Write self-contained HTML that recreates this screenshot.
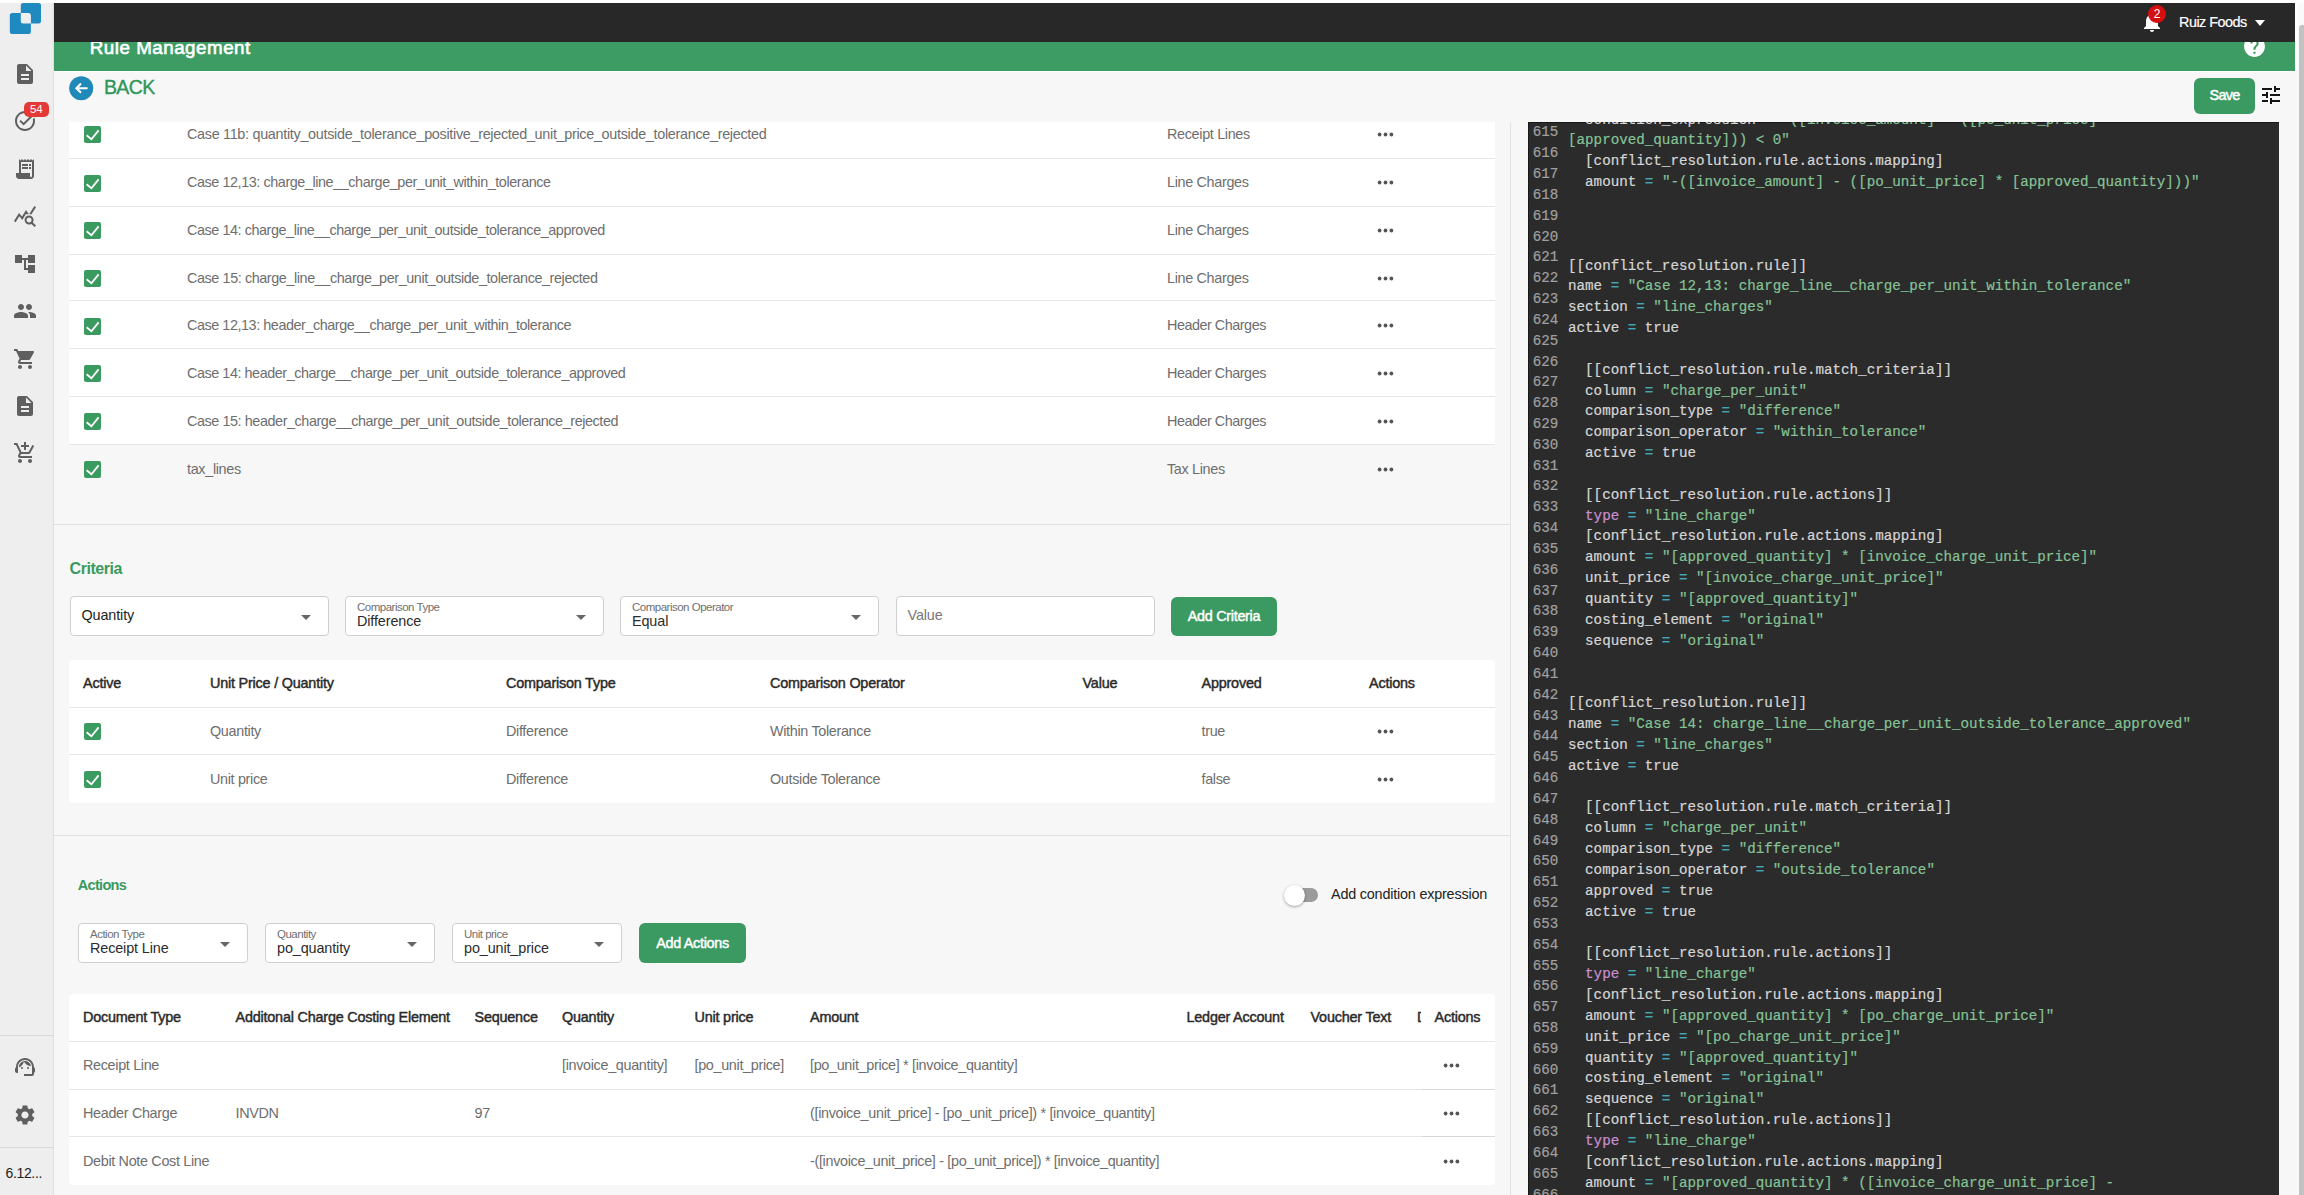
<!DOCTYPE html>
<html><head><meta charset="utf-8"><title>Rule Management</title><style>
*{margin:0;padding:0;box-sizing:border-box}
html,body{width:2304px;height:1195px;overflow:hidden;background:#fff;font-family:"Liberation Sans",sans-serif}
.abs{position:absolute}
.txt{font-size:14.4px;color:#6e6e6e;line-height:22px;white-space:pre;letter-spacing:-0.33px}
.th{font-size:14.4px;color:#2a2a2a;font-weight:normal;-webkit-text-stroke:0.45px #2a2a2a;line-height:22px;white-space:pre;letter-spacing:-0.2px}
.box{background:#fff;border:1px solid #cfcfcf;border-radius:4px}
.lbl{font-size:11.5px;color:#6f6f6f;line-height:14px;white-space:pre;letter-spacing:-0.5px}
.val{font-size:14.4px;color:#2b2b2b;line-height:20px;white-space:pre;letter-spacing:-0.12px}
.btn{background:#3b9a62;border-radius:6px;color:#fff;font-size:14.4px;font-weight:normal;-webkit-text-stroke:0.45px #fff;text-align:center;letter-spacing:-0.3px}
pre{position:absolute;font-family:"Liberation Mono",monospace;font-size:14.23px;line-height:20.85px;white-space:pre;-webkit-text-stroke:0.2px currentColor}
.nums{left:5.2px;top:0.9px;color:#a0a0a0;line-height:20.835px}
.code{left:40.5px;top:-11.9px;color:#d6d6d6}
.code s{text-decoration:none;color:#85c296}
.code b{font-weight:normal;color:#43a7b6}
.code i{font-style:normal;color:#c98fd0}
</style></head>
<body>
<div class="abs" style="left:0;top:0;width:54px;height:1195px;background:#eeeeee;border-right:1px solid #dedede"></div>
<div class="abs" style="left:0;top:0;width:2304px;height:3px;background:#fff"></div>
<svg class="abs" style="left:0;top:0" width="54" height="40" viewBox="0 0 54 40"><path fill-rule="evenodd" fill="#1f8ac0" d="M23.3 2.9h15.2a2.5 2.5 0 0 1 2.5 2.5v15.5a2.5 2.5 0 0 1-2.5 2.5H23.3a2.5 2.5 0 0 1-2.5-2.5V5.4a2.5 2.5 0 0 1 2.5-2.5z M12.3 13h16.1a2.5 2.5 0 0 1 2.5 2.5v16.1a2.5 2.5 0 0 1-2.5 2.5H12.3a2.5 2.5 0 0 1-2.5-2.5V15.5a2.5 2.5 0 0 1 2.5-2.5z"/></svg>
<div class="abs" style="left:13.0px;top:62.0px"><svg width="24" height="24" viewBox="0 0 24 24" style="display:block"><path fill="#5f5f5f" d="M14 2H6c-1.1 0-2 .9-2 2v16c0 1.1.9 2 2 2h12c1.1 0 2-.9 2-2V8l-6-6zm2 16H8v-2h8v2zm0-4H8v-2h8v2zm-3-5V3.5L18.5 9H13z"/></svg></div>
<div class="abs" style="left:13.0px;top:109.0px"><svg width="24" height="24" viewBox="0 0 24 24" style="display:block"><path fill="#5f5f5f" d="M22,5.18L10.59,16.6l-4.24-4.24l1.41-1.41l2.83,2.83l10-10L22,5.18z M19.79,10.22C19.92,10.79,20,11.39,20,12c0,4.42-3.58,8-8,8s-8-3.58-8-8c0-4.42,3.58-8,8-8c1.58,0,3.04,0.46,4.28,1.25l1.44-1.44C16.1,2.67,14.13,2,12,2C6.48,2,2,6.48,2,12c0,5.52,4.48,10,10,10s10-4.48,10-10c0-1.19-0.22-2.33-0.6-3.39L19.79,10.22z"/></svg></div>
<div class="abs" style="left:13.0px;top:157.0px"><svg width="24" height="24" viewBox="0 0 24 24" style="display:block"><path fill="#5f5f5f" d="M19.5 3.5L18 2l-1.5 1.5L15 2l-1.5 1.5L12 2l-1.5 1.5L9 2 7.5 3.5 6 2v14H3v3c0 1.66 1.34 3 3 3h12c1.66 0 3-1.34 3-3V2l-1.5 1.5zM19 19c0 .55-.45 1-1 1s-1-.45-1-1v-3H8V5h11v14zM9 7h6v2H9zm7 0h2v2h-2zm-7 3h6v2H9zm7 0h2v2h-2z"/></svg></div>
<div class="abs" style="left:13.0px;top:204.0px"><svg width="24" height="24" viewBox="0 0 24 24" style="display:block"><path fill="#5f5f5f" d="M19.88 18.47c.44-.7.7-1.51.7-2.39 0-2.49-2.01-4.5-4.5-4.5s-4.5 2.01-4.5 4.5 2.01 4.5 4.49 4.5c.88 0 1.7-.26 2.39-.7L21.58 23 23 21.58l-3.12-3.11zm-3.8.11c-1.38 0-2.5-1.12-2.5-2.5s1.12-2.5 2.5-2.5 2.5 1.12 2.5 2.5-1.12 2.5-2.5 2.5zm-.36-8.5c-.74.02-1.45.18-2.1.45l-.55-.83-3.8 6.18-3.01-3.52-3.63 5.81L1 17l5-8 3 3.5L13 6l2.72 4.08zm2.59.5c-.64-.28-1.33-.45-2.05-.49L21.38 2 23 3.18l-4.69 7.4z"/></svg></div>
<div class="abs" style="left:13.0px;top:252.0px"><svg width="24" height="24" viewBox="0 0 24 24" style="display:block"><path fill="#5f5f5f" d="M22 11V3h-7v3H9V3H2v8h7V8h2v10h4v3h7v-8h-7v3h-2V8h2v3z"/></svg></div>
<div class="abs" style="left:13.0px;top:299.0px"><svg width="24" height="24" viewBox="0 0 24 24" style="display:block"><path fill="#5f5f5f" d="M16 11c1.66 0 2.99-1.34 2.99-3S17.66 5 16 5c-1.66 0-3 1.34-3 3s1.34 3 3 3zm-8 0c1.66 0 2.99-1.34 2.99-3S9.66 5 8 5C6.34 5 5 6.34 5 8s1.34 3 3 3zm0 2c-2.33 0-7 1.17-7 3.5V19h14v-2.5c0-2.33-4.67-3.5-7-3.5zm8 0c-.29 0-.62.02-.97.05 1.16.84 1.97 1.970 1.97 3.45V19h6v-2.5c0-2.33-4.670-3.5-7-3.5z"/></svg></div>
<div class="abs" style="left:13.0px;top:347.0px"><svg width="24" height="24" viewBox="0 0 24 24" style="display:block"><path fill="#5f5f5f" d="M7 18c-1.1 0-1.99.9-1.99 2S5.9 22 7 22s2-.9 2-2-.9-2-2-2zM1 2v2h2l3.6 7.59-1.35 2.45c-.16.28-.25.61-.25.96 0 1.1.9 2 2 2h12v-2H7.42c-.14 0-.25-.11-.25-.25l.03-.12.9-1.63h7.45c.75 0 1.41-.41 1.75-1.03l3.58-6.49c.08-.14.12-.31.12-.48 0-.55-.45-1-1-1H5.21l-.94-2H1zm16 16c-1.1 0-1.99.9-1.99 2s.89 2 1.99 2 2-.9 2-2-.9-2-2-2z"/></svg></div>
<div class="abs" style="left:13.0px;top:394.0px"><svg width="24" height="24" viewBox="0 0 24 24" style="display:block"><path fill="#5f5f5f" d="M14 2H6c-1.1 0-2 .9-2 2v16c0 1.1.9 2 2 2h12c1.1 0 2-.9 2-2V8l-6-6zm2 16H8v-2h8v2zm0-4H8v-2h8v2zm-3-5V3.5L18.5 9H13z"/></svg></div>
<div class="abs" style="left:13.0px;top:441.0px"><svg width="24" height="24" viewBox="0 0 24 24" style="display:block"><path fill="#5f5f5f" d="M11 9h2V6h3V4h-3V1h-2v3H8v2h3v3zm-4 9c-1.1 0-1.99.9-1.99 2S5.9 22 7 22s2-.9 2-2-.9-2-2-2zm10 0c-1.1 0-1.99.9-1.99 2s.89 2 1.99 2 2-.9 2-2-.9-2-2-2zm-9.83-3.25l.03-.12.9-1.63h7.45c.75 0 1.41-.41 1.75-1.03l3.86-7.01L19.42 4h-.01l-1.1 2-2.76 5H8.53l-.13-.27L6.16 6l-.95-2-.94-2H1v2h2l3.6 7.59-1.35 2.45c-.16.28-.25.61-.25.96 0 1.1.9 2 2 2h12v-2H7.42c-.13 0-.25-.11-.25-.25z"/></svg></div>
<div class="abs" style="left:13.0px;top:1055.0px"><svg width="24" height="24" viewBox="0 0 24 24" style="display:block"><path fill="#5f5f5f" d="M21 12.22C21 6.73 16.74 3 12 3c-4.69 0-9 3.65-9 9.28-.6.34-1 .98-1 1.72v2c0 1.1.9 2 2 2h1v-6.1c0-3.87 3.13-7 7-7s7 3.13 7 7V19h-8v2h8c1.1 0 2-.9 2-2v-1.22c.59-.31 1-.92 1-1.64v-2.3c0-.7-.41-1.31-1-1.62zM9 12a1 1 0 1 0 0 2 1 1 0 1 0 0-2zm6 0a1 1 0 1 0 0 2 1 1 0 1 0 0-2zm3-.97C17.52 8.18 15.04 6 12.05 6c-3.03 0-6.290 2.51-6.03 6.45 2.47-1.01 4.33-3.21 4.86-5.89 1.31 2.63 4 4.44 7.12 4.470z"/></svg></div>
<div class="abs" style="left:13.0px;top:1103.0px"><svg width="24" height="24" viewBox="0 0 24 24" style="display:block"><path fill="#5f5f5f" d="M19.14 12.94c.04-.3.06-.61.06-.94 0-.32-.02-.64-.07-.94l2.03-1.58c.18-.14.23-.41.12-.61l-1.92-3.32c-.12-.22-.37-.29-.59-.22l-2.39.96c-.5-.38-1.03-.7-1.62-.94l-.36-2.54c-.04-.24-.24-.41-.48-.41h-3.84c-.24 0-.43.17-.47.41l-.36 2.54c-.59.24-1.13.57-1.62.94l-2.39-.96c-.22-.08-.47 0-.59.22L2.74 8.87c-.12.21-.08.47.12.61l2.03 1.58c-.05.3-.09.63-.09.94s.02.64.07.94l-2.03 1.58c-.18.14-.23.41-.12.61l1.92 3.32c.12.22.37.29.59.22l2.39-.96c.5.38 1.03.7 1.62.94l.36 2.54c.05.24.24.41.48.41h3.84c.24 0 .44-.17.47-.41l.36-2.54c.59-.24 1.13-.56 1.62-.94l2.39.96c.22.08.47 0 .59-.22l1.92-3.32c.12-.22.07-.47-.12-.61l-2.01-1.58zM12 15.6c-1.98 0-3.6-1.62-3.6-3.6s1.62-3.6 3.6-3.6 3.6 1.62 3.6 3.6-1.62 3.6-3.6 3.6z"/></svg></div>
<div class="abs" style="left:23.8px;top:102.2px;width:25px;height:15px;background:#e53935;border-radius:5px;color:#fff;font-size:11.5px;line-height:15px;text-align:center">54</div>
<div class="abs" style="left:0;top:1035px;width:53px;height:1px;background:#d8d8d8"></div>
<div class="abs" style="left:0;top:1147px;width:53px;height:1px;background:#d8d8d8"></div>
<div class="abs" style="left:5.5px;top:1163px;font-size:14px;color:#222;line-height:20px;letter-spacing:-0.35px">6.12...</div>
<div class="abs" style="left:54px;top:70px;width:2250px;height:1125px;background:#f7f7f7"></div>
<div class="abs" style="left:54px;top:70.8px;width:2241px;height:1.2px;background:#fff"></div>
<div class="abs" style="left:54px;top:40px;width:2241px;height:30.8px;background:#3d9b64"></div>
<div class="abs" style="left:89.8px;top:36px;font-size:18.8px;font-weight:normal;-webkit-text-stroke:0.6px #fff;color:#fff;line-height:24px;letter-spacing:0.5px">Rule Management</div>
<div class="abs" style="left:2242px;top:34px"><svg width="25" height="25" viewBox="0 0 24 24" style="display:block"><path fill="#fff" d="M12 2C6.48 2 2 6.48 2 12s4.48 10 10 10 10-4.48 10-10S17.52 2 12 2zm1 17h-2v-2h2v2zm2.07-7.75l-.9.92C13.45 12.9 13 13.5 13 15h-2v-.5c0-1.1.45-2.1 1.17-2.83l1.24-1.26c.37-.36.59-.86.59-1.41 0-1.1-.9-2-2-2s-2 .9-2 2H8c0-2.21 1.79-4 4-4s4 1.79 4 4c0 .88-.36 1.68-.93 2.25z"/></svg></div>
<div class="abs" style="left:54px;top:3px;width:2241px;height:39px;background:#282828"></div>
<div class="abs" style="left:2139.8px;top:10px"><svg width="24" height="24" viewBox="0 0 24 24" style="display:block"><path fill="#fff" d="M12 22c1.1 0 2-.9 2-2h-4c0 1.1.89 2 2 2zm6-6v-5c0-3.07-1.64-5.64-4.5-6.32V4c0-.83-.67-1.5-1.5-1.5s-1.5.67-1.5 1.5v.68C7.63 5.36 6 7.92 6 11v5l-2 2v1h16v-1l-2-2z"/></svg></div>
<div class="abs" style="left:2148px;top:5px;width:18px;height:18px;border-radius:50%;background:#d50f0f;color:#fff;font-size:12px;line-height:18px;text-align:center">2</div>
<div class="abs" style="left:2179px;top:12px;font-size:14.4px;color:#fff;-webkit-text-stroke:0.2px #fff;line-height:20px;letter-spacing:-0.5px">Ruiz Foods</div>
<svg class="abs" style="left:2254.5px;top:20px" width="10" height="6" viewBox="0 0 10 6"><path d="M0 0h10L5 6z" fill="#fff"/></svg>
<div class="abs" style="left:2298px;top:3px;width:6px;height:1192px;background:#fafafa"></div>
<div class="abs" style="left:2299px;top:25px;width:5px;height:1170px;background:#c2c2c2;border-radius:3px 0 0 0"></div>
<svg class="abs" style="left:69.3px;top:75.5px" width="25" height="25" viewBox="0 0 25 25"><circle cx="12.2" cy="12.2" r="12" fill="#2189b8"/><path d="M18.6 12.2H7.6 M12 7.6 L7.4 12.2 L12 16.8" stroke="#fff" stroke-width="2.1" fill="none"/></svg>
<div class="abs" style="left:104px;top:74.7px;font-size:19.5px;color:#2f9658;-webkit-text-stroke:0.35px #2f9658;line-height:24px;letter-spacing:-0.65px">BACK</div>
<div class="abs btn" style="left:2194px;top:78px;width:61px;height:35.8px;line-height:35.8px;letter-spacing:-0.7px">Save</div>
<div class="abs" style="left:2258.7px;top:83.3px"><svg width="24" height="24" viewBox="0 0 24 24" style="display:block"><path fill="#151515" d="M3 17v2h6v-2H3zM3 5v2h10V5H3zm10 16v-2h8v-2h-8v-2h-2v6h2zM7 9v2H3v2h4v2h2V9H7zm14 4v-2H11v2h10zm-6-4h2V7h4V5h-4V3h-2v6z"/></svg></div>
<div class="abs" style="left:1510px;top:122px;width:1px;height:1073px;background:#e2e2e2"></div>
<div class="abs" style="left:69px;top:122px;width:1426px;height:322px;background:#fff"></div>
<div class="abs" style="left:69px;top:158px;width:1426px;height:1px;background:#e6e6e6"></div>
<div class="abs" style="left:69px;top:206px;width:1426px;height:1px;background:#e6e6e6"></div>
<div class="abs" style="left:69px;top:254px;width:1426px;height:1px;background:#e6e6e6"></div>
<div class="abs" style="left:69px;top:300px;width:1426px;height:1px;background:#e6e6e6"></div>
<div class="abs" style="left:69px;top:348px;width:1426px;height:1px;background:#e6e6e6"></div>
<div class="abs" style="left:69px;top:396px;width:1426px;height:1px;background:#e6e6e6"></div>
<div class="abs" style="left:69px;top:444px;width:1426px;height:1px;background:#e6e6e6"></div>
<div class="abs" style="left:84px;top:126.0px"><svg width="17" height="17" viewBox="0 0 17 17" style="display:block"><rect x="0" y="0" width="17" height="17" rx="2" fill="#3a9a60"/><path d="M2.6 9.2 L7.4 13.3 L14.6 4.4" stroke="#fff" stroke-width="1.8" fill="none"/></svg></div>
<div class="abs txt" style="left:187px;top:122.5px;letter-spacing:-0.308px">Case 11b: quantity_outside_tolerance_positive_rejected_unit_price_outside_tolerance_rejected</div>
<div class="abs txt" style="left:1167px;top:122.5px;letter-spacing:-0.33px">Receipt Lines</div>
<div class="abs" style="left:1377px;top:131.0px"><svg width="17" height="5" viewBox="0 0 17 5" style="display:block;margin-top:0.7px"><circle cx="2.6" cy="2.5" r="1.9" fill="#555"/><circle cx="8.5" cy="2.5" r="1.9" fill="#555"/><circle cx="14.4" cy="2.5" r="1.9" fill="#555"/></svg></div>
<div class="abs" style="left:84px;top:174.5px"><svg width="17" height="17" viewBox="0 0 17 17" style="display:block"><rect x="0" y="0" width="17" height="17" rx="2" fill="#3a9a60"/><path d="M2.6 9.2 L7.4 13.3 L14.6 4.4" stroke="#fff" stroke-width="1.8" fill="none"/></svg></div>
<div class="abs txt" style="left:187px;top:171px;letter-spacing:-0.428px">Case 12,13: charge_line__charge_per_unit_within_tolerance</div>
<div class="abs txt" style="left:1167px;top:171px;letter-spacing:-0.33px">Line Charges</div>
<div class="abs" style="left:1377px;top:179.5px"><svg width="17" height="5" viewBox="0 0 17 5" style="display:block;margin-top:0.7px"><circle cx="2.6" cy="2.5" r="1.9" fill="#555"/><circle cx="8.5" cy="2.5" r="1.9" fill="#555"/><circle cx="14.4" cy="2.5" r="1.9" fill="#555"/></svg></div>
<div class="abs" style="left:84px;top:222.0px"><svg width="17" height="17" viewBox="0 0 17 17" style="display:block"><rect x="0" y="0" width="17" height="17" rx="2" fill="#3a9a60"/><path d="M2.6 9.2 L7.4 13.3 L14.6 4.4" stroke="#fff" stroke-width="1.8" fill="none"/></svg></div>
<div class="abs txt" style="left:187px;top:218.5px;letter-spacing:-0.435px">Case 14: charge_line__charge_per_unit_outside_tolerance_approved</div>
<div class="abs txt" style="left:1167px;top:218.5px;letter-spacing:-0.33px">Line Charges</div>
<div class="abs" style="left:1377px;top:227.0px"><svg width="17" height="5" viewBox="0 0 17 5" style="display:block;margin-top:0.7px"><circle cx="2.6" cy="2.5" r="1.9" fill="#555"/><circle cx="8.5" cy="2.5" r="1.9" fill="#555"/><circle cx="14.4" cy="2.5" r="1.9" fill="#555"/></svg></div>
<div class="abs" style="left:84px;top:270.0px"><svg width="17" height="17" viewBox="0 0 17 17" style="display:block"><rect x="0" y="0" width="17" height="17" rx="2" fill="#3a9a60"/><path d="M2.6 9.2 L7.4 13.3 L14.6 4.4" stroke="#fff" stroke-width="1.8" fill="none"/></svg></div>
<div class="abs txt" style="left:187px;top:266.5px;letter-spacing:-0.411px">Case 15: charge_line__charge_per_unit_outside_tolerance_rejected</div>
<div class="abs txt" style="left:1167px;top:266.5px;letter-spacing:-0.33px">Line Charges</div>
<div class="abs" style="left:1377px;top:275.0px"><svg width="17" height="5" viewBox="0 0 17 5" style="display:block;margin-top:0.7px"><circle cx="2.6" cy="2.5" r="1.9" fill="#555"/><circle cx="8.5" cy="2.5" r="1.9" fill="#555"/><circle cx="14.4" cy="2.5" r="1.9" fill="#555"/></svg></div>
<div class="abs" style="left:84px;top:317.5px"><svg width="17" height="17" viewBox="0 0 17 17" style="display:block"><rect x="0" y="0" width="17" height="17" rx="2" fill="#3a9a60"/><path d="M2.6 9.2 L7.4 13.3 L14.6 4.4" stroke="#fff" stroke-width="1.8" fill="none"/></svg></div>
<div class="abs txt" style="left:187px;top:314px;letter-spacing:-0.445px">Case 12,13: header_charge__charge_per_unit_within_tolerance</div>
<div class="abs txt" style="left:1167px;top:314px;letter-spacing:-0.48px">Header Charges</div>
<div class="abs" style="left:1377px;top:322.5px"><svg width="17" height="5" viewBox="0 0 17 5" style="display:block;margin-top:0.7px"><circle cx="2.6" cy="2.5" r="1.9" fill="#555"/><circle cx="8.5" cy="2.5" r="1.9" fill="#555"/><circle cx="14.4" cy="2.5" r="1.9" fill="#555"/></svg></div>
<div class="abs" style="left:84px;top:365.0px"><svg width="17" height="17" viewBox="0 0 17 17" style="display:block"><rect x="0" y="0" width="17" height="17" rx="2" fill="#3a9a60"/><path d="M2.6 9.2 L7.4 13.3 L14.6 4.4" stroke="#fff" stroke-width="1.8" fill="none"/></svg></div>
<div class="abs txt" style="left:187px;top:361.5px;letter-spacing:-0.45px">Case 14: header_charge__charge_per_unit_outside_tolerance_approved</div>
<div class="abs txt" style="left:1167px;top:361.5px;letter-spacing:-0.48px">Header Charges</div>
<div class="abs" style="left:1377px;top:370.0px"><svg width="17" height="5" viewBox="0 0 17 5" style="display:block;margin-top:0.7px"><circle cx="2.6" cy="2.5" r="1.9" fill="#555"/><circle cx="8.5" cy="2.5" r="1.9" fill="#555"/><circle cx="14.4" cy="2.5" r="1.9" fill="#555"/></svg></div>
<div class="abs" style="left:84px;top:413.0px"><svg width="17" height="17" viewBox="0 0 17 17" style="display:block"><rect x="0" y="0" width="17" height="17" rx="2" fill="#3a9a60"/><path d="M2.6 9.2 L7.4 13.3 L14.6 4.4" stroke="#fff" stroke-width="1.8" fill="none"/></svg></div>
<div class="abs txt" style="left:187px;top:409.5px;letter-spacing:-0.427px">Case 15: header_charge__charge_per_unit_outside_tolerance_rejected</div>
<div class="abs txt" style="left:1167px;top:409.5px;letter-spacing:-0.48px">Header Charges</div>
<div class="abs" style="left:1377px;top:418.0px"><svg width="17" height="5" viewBox="0 0 17 5" style="display:block;margin-top:0.7px"><circle cx="2.6" cy="2.5" r="1.9" fill="#555"/><circle cx="8.5" cy="2.5" r="1.9" fill="#555"/><circle cx="14.4" cy="2.5" r="1.9" fill="#555"/></svg></div>
<div class="abs" style="left:84px;top:461.0px"><svg width="17" height="17" viewBox="0 0 17 17" style="display:block"><rect x="0" y="0" width="17" height="17" rx="2" fill="#3a9a60"/><path d="M2.6 9.2 L7.4 13.3 L14.6 4.4" stroke="#fff" stroke-width="1.8" fill="none"/></svg></div>
<div class="abs txt" style="left:187px;top:457.5px;letter-spacing:-0.33px">tax_lines</div>
<div class="abs txt" style="left:1167px;top:457.5px;letter-spacing:-0.33px">Tax Lines</div>
<div class="abs" style="left:1377px;top:466.0px"><svg width="17" height="5" viewBox="0 0 17 5" style="display:block;margin-top:0.7px"><circle cx="2.6" cy="2.5" r="1.9" fill="#555"/><circle cx="8.5" cy="2.5" r="1.9" fill="#555"/><circle cx="14.4" cy="2.5" r="1.9" fill="#555"/></svg></div>
<div class="abs" style="left:54px;top:524px;width:1456px;height:1px;background:#e0e0e0"></div>
<div class="abs" style="left:69.6px;top:558px;font-size:16px;font-weight:bold;color:#3a9a60;line-height:22px;letter-spacing:-0.45px">Criteria</div>
<div class="abs box" style="left:69.5px;top:596px;width:259.5px;height:40px"><div class="abs val" style="left:11px;top:7.5px;color:#222">Quantity</div><div class="abs" style="left:230.0px;top:17.5px"><svg width="10" height="5" viewBox="0 0 10 5" style="display:block"><path d="M0 0 L10 0 L5 5z" fill="#666"/></svg></div></div>
<div class="abs box" style="left:345px;top:596px;width:259px;height:40px"><div class="abs lbl" style="left:11px;top:3.2px">Comparison Type</div><div class="abs val" style="left:11px;top:14.3px">Difference</div><div class="abs" style="left:229.5px;top:17.5px"><svg width="10" height="5" viewBox="0 0 10 5" style="display:block"><path d="M0 0 L10 0 L5 5z" fill="#666"/></svg></div></div>
<div class="abs box" style="left:620px;top:596px;width:259px;height:40px"><div class="abs lbl" style="left:11px;top:3.2px">Comparison Operator</div><div class="abs val" style="left:11px;top:14.3px">Equal</div><div class="abs" style="left:229.5px;top:17.5px"><svg width="10" height="5" viewBox="0 0 10 5" style="display:block"><path d="M0 0 L10 0 L5 5z" fill="#666"/></svg></div></div>
<div class="abs box" style="left:895.5px;top:596px;width:259.5px;height:40px"><div class="abs val" style="left:11px;top:7.5px;color:#777">Value</div></div>
<div class="abs btn" style="left:1171px;top:596.5px;width:106px;height:39.5px;line-height:39.5px">Add Criteria</div>
<div class="abs" style="left:69px;top:660px;width:1426px;height:143px;background:#fff;border-radius:4px"></div>
<div class="abs" style="left:69px;top:707px;width:1426px;height:1px;background:#e6e6e6"></div>
<div class="abs" style="left:69px;top:754px;width:1426px;height:1px;background:#e6e6e6"></div>
<div class="abs th" style="left:83px;top:672.0px">Active</div>
<div class="abs th" style="left:210px;top:672.0px">Unit Price / Quantity</div>
<div class="abs th" style="left:506px;top:672.0px">Comparison Type</div>
<div class="abs th" style="left:770px;top:672.0px">Comparison Operator</div>
<div class="abs th" style="left:1082.5px;top:672.0px">Value</div>
<div class="abs th" style="left:1201.5px;top:672.0px">Approved</div>
<div class="abs th" style="left:1369px;top:672.0px">Actions</div>
<div class="abs" style="left:84px;top:723.0px"><svg width="17" height="17" viewBox="0 0 17 17" style="display:block"><rect x="0" y="0" width="17" height="17" rx="2" fill="#3a9a60"/><path d="M2.6 9.2 L7.4 13.3 L14.6 4.4" stroke="#fff" stroke-width="1.8" fill="none"/></svg></div>
<div class="abs txt" style="left:210px;top:719.5px">Quantity</div>
<div class="abs txt" style="left:506px;top:719.5px">Difference</div>
<div class="abs txt" style="left:770px;top:719.5px">Within Tolerance</div>
<div class="abs txt" style="left:1201.5px;top:719.5px">true</div>
<div class="abs" style="left:1377px;top:728.0px"><svg width="17" height="5" viewBox="0 0 17 5" style="display:block;margin-top:0.7px"><circle cx="2.6" cy="2.5" r="1.9" fill="#555"/><circle cx="8.5" cy="2.5" r="1.9" fill="#555"/><circle cx="14.4" cy="2.5" r="1.9" fill="#555"/></svg></div>
<div class="abs" style="left:84px;top:771.0px"><svg width="17" height="17" viewBox="0 0 17 17" style="display:block"><rect x="0" y="0" width="17" height="17" rx="2" fill="#3a9a60"/><path d="M2.6 9.2 L7.4 13.3 L14.6 4.4" stroke="#fff" stroke-width="1.8" fill="none"/></svg></div>
<div class="abs txt" style="left:210px;top:767.5px">Unit price</div>
<div class="abs txt" style="left:506px;top:767.5px">Difference</div>
<div class="abs txt" style="left:770px;top:767.5px">Outside Tolerance</div>
<div class="abs txt" style="left:1201.5px;top:767.5px">false</div>
<div class="abs" style="left:1377px;top:776.0px"><svg width="17" height="5" viewBox="0 0 17 5" style="display:block;margin-top:0.7px"><circle cx="2.6" cy="2.5" r="1.9" fill="#555"/><circle cx="8.5" cy="2.5" r="1.9" fill="#555"/><circle cx="14.4" cy="2.5" r="1.9" fill="#555"/></svg></div>
<div class="abs" style="left:54px;top:835px;width:1456px;height:1px;background:#e0e0e0"></div>
<div class="abs" style="left:77.8px;top:874px;font-size:14.5px;font-weight:bold;color:#3a9a60;line-height:22px;letter-spacing:-0.7px">Actions</div>
<div class="abs" style="left:1287px;top:888px;width:31px;height:14px;border-radius:7px;background:#9b9b9b"></div>
<div class="abs" style="left:1284px;top:884.5px;width:21px;height:21px;border-radius:50%;background:#fff;box-shadow:0 1px 3px rgba(0,0,0,0.35)"></div>
<div class="abs" style="left:1331px;top:883px;font-size:14.4px;color:#222;line-height:22px;letter-spacing:-0.2px">Add condition expression</div>
<div class="abs box" style="left:78px;top:923px;width:170px;height:40px"><div class="abs lbl" style="left:11px;top:3.2px">Action Type</div><div class="abs val" style="left:11px;top:14.3px">Receipt Line</div><div class="abs" style="left:140.5px;top:17.5px"><svg width="10" height="5" viewBox="0 0 10 5" style="display:block"><path d="M0 0 L10 0 L5 5z" fill="#666"/></svg></div></div>
<div class="abs box" style="left:265px;top:923px;width:170px;height:40px"><div class="abs lbl" style="left:11px;top:3.2px">Quantity</div><div class="abs val" style="left:11px;top:14.3px">po_quantity</div><div class="abs" style="left:140.5px;top:17.5px"><svg width="10" height="5" viewBox="0 0 10 5" style="display:block"><path d="M0 0 L10 0 L5 5z" fill="#666"/></svg></div></div>
<div class="abs box" style="left:452px;top:923px;width:170px;height:40px"><div class="abs lbl" style="left:11px;top:3.2px">Unit price</div><div class="abs val" style="left:11px;top:14.3px">po_unit_price</div><div class="abs" style="left:140.5px;top:17.5px"><svg width="10" height="5" viewBox="0 0 10 5" style="display:block"><path d="M0 0 L10 0 L5 5z" fill="#666"/></svg></div></div>
<div class="abs btn" style="left:639px;top:923px;width:107px;height:40px;line-height:40px">Add Actions</div>
<div class="abs" style="left:69px;top:994px;width:1426px;height:191px;background:#fff;border-radius:4px"></div>
<div class="abs" style="left:69px;top:1041px;width:1426px;height:1px;background:#e6e6e6"></div>
<div class="abs" style="left:69px;top:1089px;width:1426px;height:1px;background:#e6e6e6"></div>
<div class="abs" style="left:69px;top:1136px;width:1426px;height:1px;background:#e6e6e6"></div>
<div class="abs" style="left:1422px;top:1089px;width:73px;height:1px;background:#d8d8d8"></div>
<div class="abs" style="left:1422px;top:1136px;width:73px;height:1px;background:#d8d8d8"></div>
<div class="abs th" style="left:83px;top:1006px">Document Type</div>
<div class="abs th" style="left:235.5px;top:1006px">Additonal Charge Costing Element</div>
<div class="abs th" style="left:474.5px;top:1006px">Sequence</div>
<div class="abs th" style="left:562px;top:1006px">Quantity</div>
<div class="abs th" style="left:694.5px;top:1006px">Unit price</div>
<div class="abs th" style="left:810px;top:1006px">Amount</div>
<div class="abs th" style="left:1186.5px;top:1006px">Ledger Account</div>
<div class="abs th" style="left:1310.5px;top:1006px">Voucher Text</div>
<div class="abs th" style="left:1434.5px;top:1006px">Actions</div>
<div class="abs" style="left:1417px;top:1006px;width:4px;height:22px;overflow:hidden"><div class="th">D</div></div>
<div class="abs txt" style="left:83px;top:1054px">Receipt Line</div>
<div class="abs txt" style="left:562px;top:1054px">[invoice_quantity]</div>
<div class="abs txt" style="left:694.5px;top:1054px">[po_unit_price]</div>
<div class="abs txt" style="left:810px;top:1054px">[po_unit_price] * [invoice_quantity]</div>
<div class="abs" style="left:1443px;top:1062.5px"><svg width="17" height="5" viewBox="0 0 17 5" style="display:block;margin-top:0.7px"><circle cx="2.6" cy="2.5" r="1.9" fill="#555"/><circle cx="8.5" cy="2.5" r="1.9" fill="#555"/><circle cx="14.4" cy="2.5" r="1.9" fill="#555"/></svg></div>
<div class="abs txt" style="left:83px;top:1102px">Header Charge</div>
<div class="abs txt" style="left:235.5px;top:1102px">INVDN</div>
<div class="abs txt" style="left:474.5px;top:1102px">97</div>
<div class="abs txt" style="left:810px;top:1102px">([invoice_unit_price] - [po_unit_price]) * [invoice_quantity]</div>
<div class="abs" style="left:1443px;top:1110.5px"><svg width="17" height="5" viewBox="0 0 17 5" style="display:block;margin-top:0.7px"><circle cx="2.6" cy="2.5" r="1.9" fill="#555"/><circle cx="8.5" cy="2.5" r="1.9" fill="#555"/><circle cx="14.4" cy="2.5" r="1.9" fill="#555"/></svg></div>
<div class="abs txt" style="left:83px;top:1149.5px">Debit Note Cost Line</div>
<div class="abs txt" style="left:810px;top:1149.5px">-([invoice_unit_price] - [po_unit_price]) * [invoice_quantity]</div>
<div class="abs" style="left:1443px;top:1158.0px"><svg width="17" height="5" viewBox="0 0 17 5" style="display:block;margin-top:0.7px"><circle cx="2.6" cy="2.5" r="1.9" fill="#555"/><circle cx="8.5" cy="2.5" r="1.9" fill="#555"/><circle cx="14.4" cy="2.5" r="1.9" fill="#555"/></svg></div>
<div class="abs" style="left:1527.5px;top:121.5px;width:751px;height:1074px;background:#2b2b2b;overflow:hidden;box-shadow:inset 1px 1px 0 #181818">
<pre class="nums">615
616
617
618
619
620
621
622
623
624
625
626
627
628
629
630
631
632
633
634
635
636
637
638
639
640
641
642
643
644
645
646
647
648
649
650
651
652
653
654
655
656
657
658
659
660
661
662
663
664
665
666
667</pre>
<pre class="code">  condition_expression <b>=</b> <s>&quot;([invoice_amount] - ([po_unit_price] * </s>
<s>[approved_quantity])) &lt; 0&quot;</s>
  [conflict_resolution.rule.actions.mapping]
  amount <b>=</b> <s>&quot;-([invoice_amount] - ([po_unit_price] * [approved_quantity]))&quot;</s>
 
 
 
[[conflict_resolution.rule]]
name <b>=</b> <s>&quot;Case 12,13: charge_line__charge_per_unit_within_tolerance&quot;</s>
section <b>=</b> <s>&quot;line_charges&quot;</s>
active <b>=</b> true
 
  [[conflict_resolution.rule.match_criteria]]
  column <b>=</b> <s>&quot;charge_per_unit&quot;</s>
  comparison_type <b>=</b> <s>&quot;difference&quot;</s>
  comparison_operator <b>=</b> <s>&quot;within_tolerance&quot;</s>
  active <b>=</b> true
 
  [[conflict_resolution.rule.actions]]
  <i>type</i> <b>=</b> <s>&quot;line_charge&quot;</s>
  [conflict_resolution.rule.actions.mapping]
  amount <b>=</b> <s>&quot;[approved_quantity] * [invoice_charge_unit_price]&quot;</s>
  unit_price <b>=</b> <s>&quot;[invoice_charge_unit_price]&quot;</s>
  quantity <b>=</b> <s>&quot;[approved_quantity]&quot;</s>
  costing_element <b>=</b> <s>&quot;original&quot;</s>
  sequence <b>=</b> <s>&quot;original&quot;</s>
 
 
[[conflict_resolution.rule]]
name <b>=</b> <s>&quot;Case 14: charge_line__charge_per_unit_outside_tolerance_approved&quot;</s>
section <b>=</b> <s>&quot;line_charges&quot;</s>
active <b>=</b> true
 
  [[conflict_resolution.rule.match_criteria]]
  column <b>=</b> <s>&quot;charge_per_unit&quot;</s>
  comparison_type <b>=</b> <s>&quot;difference&quot;</s>
  comparison_operator <b>=</b> <s>&quot;outside_tolerance&quot;</s>
  approved <b>=</b> true
  active <b>=</b> true
 
  [[conflict_resolution.rule.actions]]
  <i>type</i> <b>=</b> <s>&quot;line_charge&quot;</s>
  [conflict_resolution.rule.actions.mapping]
  amount <b>=</b> <s>&quot;[approved_quantity] * [po_charge_unit_price]&quot;</s>
  unit_price <b>=</b> <s>&quot;[po_charge_unit_price]&quot;</s>
  quantity <b>=</b> <s>&quot;[approved_quantity]&quot;</s>
  costing_element <b>=</b> <s>&quot;original&quot;</s>
  sequence <b>=</b> <s>&quot;original&quot;</s>
  [[conflict_resolution.rule.actions]]
  <i>type</i> <b>=</b> <s>&quot;line_charge&quot;</s>
  [conflict_resolution.rule.actions.mapping]
  amount <b>=</b> <s>&quot;[approved_quantity] * ([invoice_charge_unit_price] -</s></pre>
</div>
</body></html>
